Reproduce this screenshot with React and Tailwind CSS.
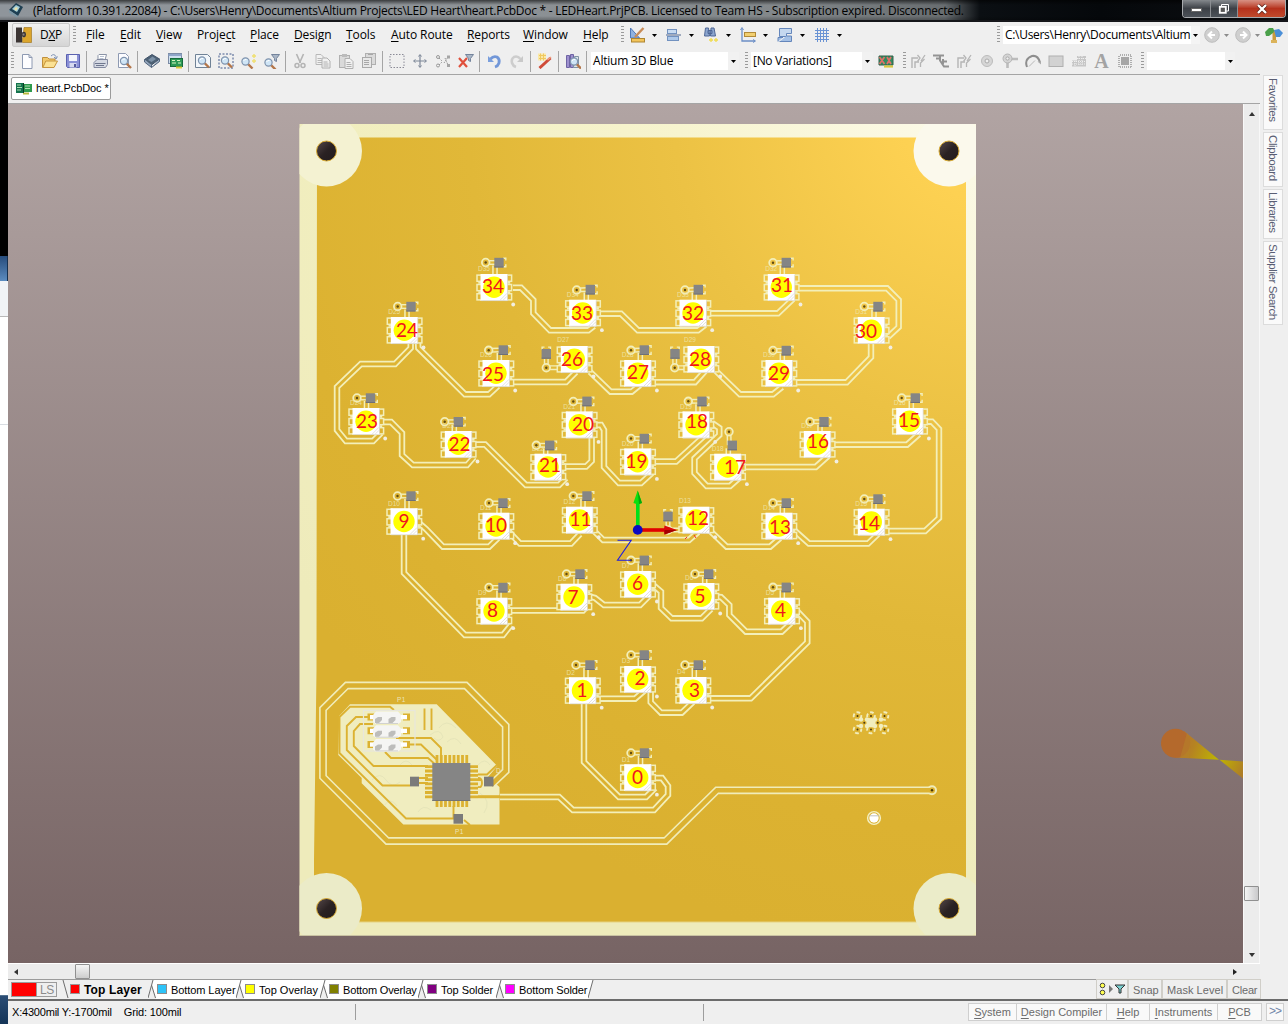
import React from "react";

const UI = "font-['Open_Sans','Noto_Sans',sans-serif]";
const SANS = "font-['Liberation_Sans',Arial,sans-serif]";

/* ---------- board data: [n, cx, cy, capX, capY, viaX, viaY, labelX, labelY] ---------- */
const LEDS = [
  [34, 494, 287.3, 499, 262.5, 485.7, 262.5, 493, 286],
  [33, 582.7, 313, 590.3, 289.5, 576.7, 290, 582, 313],
  [24, 404.3, 330.3, 411, 306.5, 397.7, 306.5, 407, 330.5],
  [25, 496, 373.3, 503.3, 350, 488.7, 350.3, 493, 374.5],
  [26, 574.3, 359.3, 546.3, 353.7, 546.3, 367.7, 572, 359.5],
  [27, 637.7, 373.3, 644.3, 350, 631, 350.3, 638, 372.5],
  [20, 579.3, 424.7, 587, 401.3, 573.3, 401.5, 583, 424],
  [22, 458.3, 444.3, 458.3, 421.7, 444.7, 421.7, 459.5, 444.5],
  [21, 548, 467, 549.7, 445.3, 536.3, 445.3, 550, 465],
  [23, 366, 421.3, 370.5, 398, 357, 398, 367, 421.5],
  [31, 781.3, 287.3, 786.3, 262.5, 773, 262.7, 782, 285],
  [32, 693, 313, 698.3, 289.5, 685, 290, 693, 313.5],
  [30, 871.3, 330.3, 878, 306.5, 864.3, 306.5, 866, 331.5],
  [28, 701, 359.3, 675, 353.7, 674.7, 367.7, 700, 359],
  [29, 779, 373.3, 786.3, 350.5, 773, 350.5, 779, 373.5],
  [18, 696, 424.7, 702, 401.3, 688.3, 401.3, 697, 421],
  [15, 909.7, 421.3, 915.3, 398, 901.7, 398, 909, 420],
  [16, 817.3, 444.3, 824, 421.7, 810, 421.7, 818, 441],
  [17, 727.7, 467, 732.3, 445.3, 729, 431.7, 735, 467.5],
  [19, 637.7, 461.7, 644.3, 438.5, 631, 438.5, 636.5, 461.5],
  [12, 696, 520, 668, 516.3, 668, 530, 698, 518],
  [13, 779, 526, 786.3, 503, 773, 503, 780, 527],
  [6, 637.7, 584.3, 644.3, 560.3, 631, 560.3, 637.5, 583],
  [5, 701, 596.3, 708.7, 574, 695, 574, 700, 596],
  [4, 781.7, 611, 786.3, 587.3, 773, 587.3, 780.5, 610.5],
  [2, 637.7, 679.3, 644.3, 655, 631, 655, 640, 678],
  [3, 693, 690.3, 698.3, 665, 685, 665, 694.5, 690],
  [14, 871.3, 522, 878, 499, 864.3, 499, 869, 523],
  [11, 579.5, 520, 587, 496, 573.3, 496, 580.5, 519],
  [10, 496, 526, 503, 503, 489, 503, 496, 525],
  [9, 404, 521.5, 411, 496, 397.5, 496, 404, 521.5],
  [8, 494, 611, 503, 587.5, 489, 587.5, 492.5, 610.5],
  [7, 574, 597, 580, 574, 566.5, 574, 573, 597.5],
  [1, 582.5, 690.5, 590, 665, 576, 665, 582, 690],
  [0, 637.7, 777.5, 644.5, 753, 631, 753, 637.5, 777.5],
];

const TRACES = [
  "513,287.7 521,287.7 533.3,300 533.3,313.3 550,330.3 588.3,330.3 594,326",
  "600,313.7 621,313.7 638,330.3 698,330.3 705,325",
  "711,313.3 778,313.3 793,299",
  "799,288.3 887,288.3 898.7,300 898.7,327 888,337",
  "871,344 871,357.3 846.7,382.3 795,382.3",
  "782,387 773,394.3 740,394.3 715,370",
  "705,371 695,382.2 653,382.2",
  "640,385 631.7,391.7 610.7,391.7 590,371.7",
  "576,372 566,382 512,382",
  "498,386 489,394.3 465,394.3 418.3,348 418,342",
  "410.7,342 410.7,348 395,364 361,364 337,387 337,430 346,441 373,441 381,433",
  "384,422 391,422 402,433 402,455 413,465 467,465 474,457",
  "476,444.5 485,444.5 526,485 559,485 566,478",
  "564,466.5 586,466.5 591.7,461 591.7,436",
  "596,425 601,425 604,430 604,467 619,483 641,483 652,473",
  "655,461.5 676,461.5 704,436",
  "712,423 719.3,428 719.3,435 694.5,458.5 694.5,473 706.7,486 730,486 739,478",
  "745,467 815.7,467 828,456",
  "835,444.7 907,444.7 919,434",
  "925,421.7 932,421.7 939,429 939,518 925,531 887,531",
  "878,534 868,543.5 809,543.5 795,531",
  "780,538 770,546.7 726.7,546.7 710,530.7",
  "698,532 689,540 603.3,540 593,530",
  "580,534 571,543.5 520,543.5 510,533",
  "498,538 489,546.7 443,546.7 426,529 419,523",
  "404,534 404,573 465,635 503,635 511,625",
  "509,610.5 583,610.5 590,603",
  "588,596 595,598 604,605 640,605 650,595",
  "652,584 661,591.7 661,608 671.7,618.3 701.7,618.3 711,609",
  "716,596.7 721,597 729.3,605 729.3,615 746,631.7 781.7,631.7 791,623",
  "797,611 807.3,621.7 807.3,642.3 750.7,698.3 708,698.3",
  "693,702 681.7,712.7 661,712.7 650.7,702.3 650.7,690",
  "645,690 635,698.7 597,698.7",
  "584,704 584,762 619,797 646,797 655,788",
  "652,778 662,778 668,786 668,795 654,810 573,810 559,797 500,797",
];

function Led({ d }) {
  const [n, x, y, cx, cy, vx, vy] = d;
  const side = cx < x - 18;
  const up = Math.abs(vx - cx) < 5 && !side;
  return (
    <g>
      {side ? (
        <>
          <path d={`M${cx - 4.2},${cy - 4}v-2.6h2.400M${cx + 1.8},${cy - 6.6}h2.400v2.6`} stroke="#f3efb9" strokeWidth="1.4" fill="none" />
          <path d={`M${vx},${vy}V${cy + 5}M${vx},${vy}H${x - 14}`} stroke="#f3efb9" strokeWidth="5" fill="none" />
          <path d={`M${vx},${vy}V${cy + 5}M${vx},${vy}H${x - 14}`} stroke="url(#gold)" strokeWidth="2.2" fill="none" />
        </>
      ) : (
        <>
          <path d={`M${cx - 4},${cy + 3}V${y - 12}`} stroke="#f3efb9" strokeWidth="5.6" />
          <path d={`M${cx - 4},${cy}V${y - 12}`} stroke="url(#gold)" strokeWidth="2.6" />
          <path d={`M${vx},${vy}L${cx - 3},${cy}`} stroke="#f3efb9" strokeWidth="5" />
          <path d={`M${vx},${vy}L${cx - 3},${cy}`} stroke="url(#gold)" strokeWidth="2.2" />
          {!up && <path d={`M${cx + 4},${cy - 4.2}h2.800v2.200M${cx + 6.8},${cy + 1.8}v2.400h-2.800`} stroke="#f3efb9" strokeWidth="1.4" fill="none" />}
        </>
      )}
      <circle cx={vx} cy={vy} r="3.8" fill="url(#gold)" stroke="#f3efb9" strokeWidth="1.8" />
      <circle cx={vx} cy={vy} r="1.2" fill="#5e4a14" />
      <rect x={cx - 4.7} y={cy - 4.7} width="9.4" height="9.6" fill="#858585" />
      <path d={`M${cx - 4.7},${cy + 4.5}h9.400`} stroke="#6e7078" strokeWidth="1" />
      {[-9.2, 0.2, 9.4].map((o) => (
        <g key={o} fill="url(#gold)" stroke="#f3efb9" strokeWidth="1.5">
          <rect x={x - 17} y={y + o - 3} width="5" height="6.2" />
          <rect x={x + 12} y={y + o - 3} width="5.6" height="6.2" />
        </g>
      ))}
      <path d={`M${x - 14},${y - 5.5}v2M${x - 14},${y + 4}v2M${x + 14.5},${y - 5.5}v2M${x + 14.5},${y + 4}v2`} stroke="#f3efb9" strokeWidth="3.4" />
      <text x={side ? x - 17 : x - 16} y={side ? y - 17 : y - 16} fontSize="6.5" fill="#efe6ac" opacity=".85" className="font-['Liberation_Sans',sans-serif]">
        {"D" + (n + 1)}
      </text>
      <rect x={x - 13.5} y={y - 13.3} width="27" height="26.8" fill="#fff" />
      <path d={`M${x - 13},${y + 13.3}h26.500v-26`} stroke="#d6d2cc" strokeWidth=".7" fill="none" />
      <path d={`M${x + 6},${y + 13}l7,-7M${x + 9},${y + 13}l4,-4`} stroke="#d5d5d5" strokeWidth=".7" />
      <circle cx={x} cy={y} r="10.7" fill="#ffff00" />
      <circle cx={x + 19.2} cy={y + 17.2} r="1.9" fill="#f2eee2" />
    </g>
  );
}

function Controller() {
  const pins = [0, 1, 2, 3, 4, 5, 6, 7];
  return (
    <g>
      <path d="M339.3 715.7L350 704.3H436.7L497.3 766L488 777L499.5 787V824.5H403.3L361.7 783.3V778L338.3 755Z" fill="#f0edbf" />
      <g stroke="#e6e5b9" strokeWidth="1" fill="none">
        <path d="M372 780q8 -9 14 0t14 2M400 765q6 -8 12 0M384 806q6 -10 13 0M430 735q10 -8 13 2q-4 6 -9 1M447 742q8 -8 14 2M456 728q-10 -10 -17 0M480 793q12 8 4 20M418 812q5 -8 13 -2M478 765q7 -8 12 0" />
      </g>
      <g stroke="#dcb231" strokeWidth="1.9" fill="none">
        <path d="M394 710L390 706.8H350L339.5 717V753L406 818.5H456" />
        <path d="M370 717H356L346.8 726V750L382.5 785.5H410" />
        <path d="M373 724H360L353.8 731V746L373.5 766H428" />
        <path d="M396 738H431L441 748V758M409 744.5H421L437 760M385 752L391 758H428L437 766" />
        <path d="M453.5 806V818M464 820L470 825M424.5 708.5V730M431.5 708.5V730M418 778H428M478 774.5H487L497 765M478 780H481M478 778q4 0 4 5t-4 4M418 783H428" />
      </g>
      <path d="M478 796.7H500" stroke="#dcb231" strokeWidth="3" />
      {pins.map((i) => (
        <path key={i} d={`M${437 + i * 4.25},755v52`} stroke="#dcb231" strokeWidth="2.8" />
      ))}
      {pins.map((i) => (
        <path key={"h" + i} d={`M425,${766.7 + i * 4.3}h53`} stroke="#dcb231" strokeWidth="2.8" />
      ))}
      <rect x="432.3" y="763" width="38" height="38" fill="#858585" />
      <path d="M432.3 800.5h38" stroke="#747474" />
      <rect x="363.5" y="710.5" width="51.5" height="40.5" fill="none" stroke="#e8e7dc" strokeWidth="1.2" />
      {[0, 1, 2].map((i) => (
        <g key={i}>
          <path d={`M367.500,${713.5 + i * 13.7}h7v7h-7zM403,${713.5 + i * 13.7}h7v7h-7z`} fill="#dcb231" />
          <rect x="370" y={715 + i * 13.7} width="37" height="4.3" fill="#fff" />
          <path d={`M373,${715 + i * 13.7}l3,-3.500h22l3,3.500v7l-3,2h-22l-3,-2z`} fill="#f5f5f3" />
          <path d={`M376,${723.5 + i * 13.7}h22`} stroke="#d2d2cf" strokeWidth="1" />
          <path d={`M375,${719 + i * 13.7}l3,-2h4v3l-3,3h-4zM388.500,${719 + i * 13.7}l3,-2h4v3l-3,3h-4z`} fill="#bdbdbb" />
        </g>
      ))}
      <rect x="410" y="776.7" width="9" height="9.7" fill="#7b7b7a" />
      <rect x="453.5" y="814" width="9.5" height="9.7" fill="#7b7b7a" />
      <g fontSize="6.5" fill="#ebe4b8" className="font-['Liberation_Sans',sans-serif]">
        <text x="397" y="702" letterSpacing=".5">P1</text>
        <text x="455" y="834" letterSpacing=".5">P1</text>
        <text x="496" y="773">D41</text>
      </g>
    </g>
  );
}

function Board() {
  const pads = [[857.5, 716], [871, 716], [884.5, 716], [857.5, 729.5], [871, 729.5], [884.5, 729.5]];
  return (
    <svg viewBox="8 104 1235 859" width="1235" height="859" className="block">
      <defs>
        <radialGradient id="gold" gradientUnits="userSpaceOnUse" cx="1000" cy="100" r="860">
          <stop offset="0" stopColor="#ffd75a" />
          <stop offset=".12" stopColor="#fdd152" />
          <stop offset=".38" stopColor="#ecc244" />
          <stop offset=".62" stopColor="#e1b838" />
          <stop offset=".85" stopColor="#dcb231" />
          <stop offset="1" stopColor="#dab030" />
        </radialGradient>
        <radialGradient id="edge" gradientUnits="userSpaceOnUse" cx="960" cy="130" r="800">
          <stop offset="0" stopColor="#fcfae9" />
          <stop offset=".35" stopColor="#f7f4cf" />
          <stop offset=".7" stopColor="#f2efc0" />
          <stop offset="1" stopColor="#eeebbb" />
        </radialGradient>
        <linearGradient id="hole" x1="0" y1="0" x2="1" y2="1">
          <stop offset="0" stopColor="#56494a" />
          <stop offset=".5" stopColor="#2a2223" />
          <stop offset="1" stopColor="#211a1b" />
        </linearGradient>
        <linearGradient id="cone" gradientUnits="userSpaceOnUse" x1="1175" y1="742" x2="1219" y2="760">
          <stop offset="0" stopColor="#b56f30" />
          <stop offset=".4" stopColor="#b58322" />
          <stop offset="1" stopColor="#beb800" />
        </linearGradient>
        <linearGradient id="cone2" gradientUnits="userSpaceOnUse" x1="1219" y1="760" x2="1243" y2="772">
          <stop offset="0" stopColor="#c0b300" />
          <stop offset="1" stopColor="#ae7d28" />
        </linearGradient>
      </defs>
      <rect x="299.5" y="124" width="676.5" height="812" fill="url(#edge)" />
      <path d="M300 935.5H976" stroke="#c9c2a2" strokeWidth="1" />
      <path d="M317 137.5H966V922H314V860L316.5 670Z" fill="url(#gold)" />
      <path d="M316 922H966" stroke="#e6d382" />
      {[[326.5, 151, "#f4f2d2"], [949, 151, "#fbf9ec"], [326.5, 908.5, "#ebebc8"], [949, 908.5, "#ebecc9"]].map(([x, y, c]) => (
        <g key={x + "-" + y}>
          <clipPath id={"c" + x + y}><rect x="299.5" y="124" width="676.5" height="811" /></clipPath>
          <circle cx={x} cy={y} r="35.5" fill={c} clipPath={`url(#c${x}${y})`} />
          <circle cx={x} cy={y} r="10" fill="url(#hole)" stroke="#d8ab35" strokeWidth="1" />
        </g>
      ))}

      <g fill="none" strokeLinejoin="miter">
        <polyline points="932,790.3 717,790.3 665.5,841 387.3,841 323,777 323,709 346.7,685.5 465.7,685.5 505.7,725.7 505.7,771 491,785" stroke="#f0ecb9" strokeWidth="7.8" />
        {TRACES.map((p) => <polyline key={p} points={p} stroke="#f3efb9" strokeWidth="6.4" />)}
      </g>
      <circle cx="932" cy="790.3" r="5" fill="#f0ecb9" />
      <Controller />
      <g fill="none">
        <polyline points="932,790.3 717,790.3 665.5,841 387.3,841 323,777 323,709 346.7,685.5 465.7,685.5 505.7,725.7 505.7,771 491,785" stroke="url(#gold)" strokeWidth="4.6" />
        {TRACES.map((p) => <polyline key={p} points={p} stroke="url(#gold)" strokeWidth="2.8" />)}
      </g>
      <circle cx="932" cy="790.3" r="3" fill="#dcb231" />
      <circle cx="932" cy="790.3" r="1.2" fill="#46360c" />

      {LEDS.map((d) => <Led key={d[0]} d={d} />)}

      <rect x="484" y="776.7" width="9.5" height="9.7" fill="#7b7b7a" />

      <g>
        {pads.map(([x, y]) => (
          <g key={x + "," + y}>
            <circle cx={x} cy={y} r="3.8" fill="none" stroke="#f1edbd" strokeWidth="1.9" strokeDasharray="3.8 2.17" strokeDashoffset="1.5" />
            <circle cx={x} cy={y} r="1" fill="#4a3a10" />
          </g>
        ))}
        <rect x="866.5" y="718.2" width="9" height="9" fill="#f1edbd" />
        {[[861, 719.5], [861, 726], [867, 719.5], [867, 726], [875, 719.5], [875, 726], [881, 719.5], [881, 726]].map(([x, y]) => (
          <circle key={x + "_" + y} cx={x} cy={y} r="2.2" fill="#f1edbd" />
        ))}
        <circle cx="864.3" cy="722.7" r="1" fill="#4a3a10" />
        <circle cx="877.7" cy="722.7" r="1" fill="#4a3a10" />
        <circle cx="874" cy="818" r="6.4" fill="#dcb231" stroke="#f4f0c4" strokeWidth="1.4" />
        <circle cx="874" cy="818" r="4.7" fill="#fff" />
        <path d="M869.5 815.8h9.5" stroke="#c0c0c0" strokeWidth="1" />
      </g>

      <g>
        <path d="M617.5 540.2H631.2L617.5 560.2H631.2" fill="none" stroke="#1d1de0" strokeWidth="1.1" />
        <rect x="636" y="502" width="3.6" height="26" fill="#00e01a" />
        <path d="M637.7 490.5L642 503q-4.3 2 -8.6 0Z" fill="#0be00f" />
        <path d="M637.7 490.5L642 503l-3 1Z" fill="#05a80b" />
        <rect x="640" y="528.2" width="25" height="3.6" fill="#e10000" />
        <path d="M677 530L664.5 534.5q-1.5 -4.5 0 -9Z" fill="#d90808" />
        <path d="M677 530L664.5 534.5v-4.5Z" fill="#a40000" />
        <circle cx="637.7" cy="529.9" r="4.9" fill="#0a0ac0" />
        <path d="M685 539l2 -2M694 535l2 3" stroke="#f02020" strokeWidth=".9" />
      </g>

      <path d="M1219.5 759.8L1243 761.5V778.5Z" fill="url(#cone2)" />
      <path d="M1184 731L1219 759.8L1175 757.5Z" fill="url(#cone)" />
      <circle cx="1175.5" cy="743.3" r="14.5" fill="#b4692c" />
      <path d="M1187 733q5 5 2 25H1180z" fill="#b5812a" opacity=".6" />

      <g fill="#f0141e" fontSize="19" textAnchor="middle" className="font-['Lato','Open_Sans',sans-serif]">
        {LEDS.map((d) => <text key={d[0]} x={d[7]} y={d[8] + 6.6}>{d[0]}</text>)}
      </g>
    </svg>
  );
}

/* ---------- toolbar icons (16px grid) ---------- */
const I = ({ children }) => <svg viewBox="0 0 16 16" width="16" height="16" className="block shrink-0" fill="none">{children}</svg>;
const Lens = ({ x = 0, y = 0 }) => (
  <g transform={`translate(${x} ${y})`}>
    <path d="M9 9l4.5 4.5" stroke="#b3764a" strokeWidth="2.4" />
    <circle cx="6.5" cy="6.5" r="3.6" fill="#cfe5f6" stroke="#7f93ad" strokeWidth="1.2" />
    <path d="M4.5 6q1-2 3-1.5" stroke="#fff" />
  </g>
);
const Page = ({ x = 0, y = 0, g = "#a9a9a9" }) => (
  <path transform={`translate(${x} ${y})`} d="M.5 .5h5l3 3v7h-8zM2 4.5h4M2 6.5h5M2 8.5h5" fill="#f1f1f1" stroke={g} />
);
const icons = {
  blank: <I><path d="M3.5 1.500h6.500l3 3v11h-9.500z" fill="#fdfdff" stroke="#8e9ab2" /><path d="M10 1.5v3h3" stroke="#8e9ab2" /></I>,
  open: <I><path d="M.5 14.500v-10h5l1.500 1.500h6v3" fill="#f1c96a" stroke="#bf8f3c" /><path d="M.8 14.500l3-6.500h11.700l-3.500 6.500z" fill="#fbe193" stroke="#c6953e" /><path d="M9 3q3-3 5 .5v2m-2-1.500l2 2l1.500-2.500" stroke="#7f93b5" /></I>,
  save: <I><path d="M1.5 1.500h13v13h-12l-1-1z" fill="#8a90d6" stroke="#5b62b0" /><rect x="4" y="2" width="8" height="6" fill="#f4f6fc" /><rect x="4.5" y="10" width="7" height="4.5" fill="#d7daf0" /><rect x="9" y="11" width="2" height="3" fill="#545a9c" /></I>,
  print: <I><path d="M5 7V2.500l1-1h7.500L12 7" fill="#fff" stroke="#8a93a6" /><path d="M7 3.500h4M6.500 5.500h4" stroke="#b8c2d2" /><path d="M1 9.500l3-3h10.500v5l-2 3h-11.500z" fill="#d5d9e3" stroke="#8289a0" /><path d="M2 10.500h10.500M3 12.500h8" stroke="#6f778e" /></I>,
  preview: <I><path d="M2.5 .5h7l3 3v11h-10z" fill="#fcfcff" stroke="#8e9ab2" /><Lens x={1.5} y={1.5} /></I>,
  chip: <I><path d="M.5 6.500L8 1.500l7.500 4.500l-8 6z" fill="#4d6175" stroke="#41536a" /><path d="M.5 6.500v2.500l7 5.500v-2.500M15.500 6v2.500l-8 6" fill="#93a5bb" stroke="#53667f" /><path d="M4 7l4.500-3.500l3.500 2.500l-4.500 3z" fill="#7c92a8" /></I>,
  board: <I><rect x="1.5" y=".5" width="13" height="10" fill="#cfe0ef" stroke="#7c8ca6" /><path d="M1.500 2h13" stroke="#8fa6c8" strokeWidth="2" /><rect x="3.5" y="5.5" width="12" height="8" fill="#2c9a55" stroke="#176a3b" /><path d="M5 7.500h3M10 7.500h3M5 10h4M11 10h3" stroke="#d7f5c0" /><path d="M9 14.500h6" stroke="#ddcd3d" strokeWidth="2" /></I>,
  zfit: <I><path d="M.5 1.500h12l3 3v10h-15z" fill="#f2f6fa" stroke="#6f8296" /><Lens x={.5} y={1} /></I>,
  zarea: <I><rect x="1" y="1" width="14" height="14" stroke="#435a8c" strokeDasharray="2 1.5" /><Lens x={.5} y={1} /></I>,
  zpts: <I><Lens x={-2} y={2} /><path d="M13 1v4M11 3h4M13 6v4M11 8h4" stroke="#f0e070" strokeWidth="1.4" /></I>,
  zfilter: <I><Lens x={-2} y={3} /><path d="M7.500 1.500h8l-3 4v3l-2-1v-2z" fill="#aab6c6" stroke="#74849c" /></I>,
  cut: <I><path d="M4.500 1l4 9M11.500 1l-4 9" stroke="#b4b4b4" strokeWidth="1.6" /><circle cx="5" cy="12.500" r="2" stroke="#b4b4b4" strokeWidth="1.5" /><circle cx="11" cy="12.500" r="2" stroke="#b4b4b4" strokeWidth="1.5" /></I>,
  copy: <I><Page x={.5} y={1} g="#b8b8b8" /><Page x={6.5} y={4.5} g="#b0b0b0" /></I>,
  paste: <I><rect x="1.5" y="2.5" width="10" height="12" fill="#dadada" stroke="#b0b0b0" /><rect x="4" y="1" width="5" height="3" fill="#bbb" /><Page x={6.5} y={5} g="#b0b0b0" /></I>,
  paste2: <I><rect x="4.5" y=".5" width="10" height="11" fill="#dadada" stroke="#b0b0b0" /><rect x="1.5" y="4.5" width="9" height="10" fill="#e8e8e8" stroke="#aaa" /><path d="M3 7.500h5M3 9.500h5M3 11.500h5M7 1.500h5" stroke="#a8a8a8" /></I>,
  select: <I><rect x="1" y="1.5" width="14" height="13" stroke="#8a8a96" strokeDasharray="1.5 1.5" /></I>,
  move: <I><path d="M8 2v12M2 8h12" stroke="#7d8798" strokeWidth="1.2" /><path d="M6.500 3.500l1.500-2l1.500 2M6.500 12.500l1.500 2l1.500-2M3.500 6.500l-2 1.500l2 1.500M12.500 6.500l2 1.500l-2 1.500" stroke="#7d8798" /></I>,
  desel: <I><path d="M4 5l3 3M4 12l3-3M10 5l3 7M9 10l4-6" stroke="#999" strokeDasharray="1.5 1" /><circle cx="3" cy="4" r="1.5" stroke="#999" /><circle cx="3" cy="12.500" r="1.5" stroke="#999" /><path d="M12 2.500h3v3h-3zM12 11h3v3h-3z" fill="#a5a5a5" /></I>,
  clear: <I><path d="M1 5l8 9M9 5l-8 9" stroke="#e0503c" strokeWidth="2.2" /><path d="M7.500 1.500h8l-3 4v3l-2-1v-2z" fill="#aab6c6" stroke="#74849c" /></I>,
  undo: <I><path d="M2 3v6h6z" fill="#7a9fdd" /><path d="M4.500 6q3-3.500 6.500-2q3 2 2 6q-1 3-4 4" stroke="#7297d8" strokeWidth="2.8" /></I>,
  redo: <I><path d="M14 3v6H8z" fill="#c9c9c9" /><path d="M11.500 6q-3-3.500-6.500-2q-3 2-2 6q1 3 4 4" stroke="#cdcdcd" strokeWidth="2.6" /></I>,
  wand: <I><path d="M1 .5h8v7h-8z" fill="#fae9a8" /><path d="M2 2.500h7M2 5.500h7M3.500 .5v7M6.500 .5v7" stroke="#f0c860" /><path d="M2.500 15L13.500 5" stroke="#cf4b38" strokeWidth="3" /><path d="M10.500 7l3.500-3" stroke="#f0a080" strokeWidth="1.5" /></I>,
  browse: <I><path d="M1.500 2.500h3v12h-3zM5.500 1.500h3v13h-3z" fill="#9e90cf" stroke="#6e64a4" /><path d="M9.500 3.500h4v11h-5z" fill="#dfe8ea" stroke="#8093a5" /><Lens x={2.5} y={2} /></I>,
  ruler: <I><path d="M1.500 1v10h9z" fill="#8fb2e0" stroke="#5079b8" /><path d="M14.500 1L6 10" stroke="#c88c58" strokeWidth="2.4" /><rect x="2.5" y="11.500" width="13" height="3.5" fill="#f2c45a" stroke="#ae8532" /></I>,
  align: <I><rect x="1.500" y="2.500" width="9" height="4" fill="#c9dcf2" stroke="#7292c0" /><path d="M0 8h15" stroke="#53698f" /><rect x="1.500" y="9.500" width="11" height="4" fill="#aec9ea" stroke="#7292c0" /></I>,
  find: <I><path d="M2.500 1h3l1 8h-5zM8 1h3l1.500 8h-5zM5 3.500h4v3h-4z" fill="#8ca6cf" stroke="#4e6796" /><path d="M8 11v4M6 13h4M13 11v4M11 13h4" stroke="#f0dc50" strokeWidth="1.3" /></I>,
  dim: <I><path d="M2 2v12h13" stroke="#6c8fc6" strokeWidth="1.3" /><path d="M.5 3l1.500-2.500l1.500 2.500M13 12.500l2.500 1.500l-2.500 1.500" stroke="#6c8fc6" /><rect x="4.500" y="5.500" width="11" height="4" fill="#f2cf70" stroke="#b28a38" /></I>,
  room: <I><path d="M2.500 1.500h12v5h-5v3h-7z" fill="#c5d8ef" stroke="#6486bb" /><path d="M1 14.500v-4h5M9.500 9h5v5.500h-12" fill="#a4c0e5" stroke="#6486bb" /></I>,
  grid: <I><path d="M3.500 1v14M6.500 1v14M9.500 1v14M12.500 1v14M1 3.500h14M1 6.500h14M1 9.500h14M1 12.500h14" stroke="#6a93d4" /></I>,
  nochip: <I><path d="M1 3h14v9h-14z" fill="#2f8d60" stroke="#35604b" /><path d="M1.500 4l5 7M6.500 4l-5 7M9 4l4 7M13 4l-4 7" stroke="#e07068" strokeWidth="1.7" /><path d="M6 13.500h9" stroke="#d8c840" strokeWidth="2.2" /></I>,
  r1: <I><path d="M2 15v-10h6M5 15v-6h4" stroke="#b5b5b5" strokeWidth="1.4" /><path d="M7.500 2l2.500 3l-2.500 3.500M11 8l4-6M10.500 14v-4l4-4" stroke="#b5b5b5" strokeWidth="1.3" /></I>,
  r2: <I><path d="M0 2.500h11M7 2.500v5l4 6h5M3 5.500h4M10 6v5M10 8.500h4" stroke="#939393" strokeWidth="2" /></I>,
  pad: <I><circle cx="8" cy="8" r="5.500" fill="#d6d6d6" stroke="#bcbcbc" /><circle cx="8" cy="8" r="2" fill="#efefef" stroke="#aaa" /></I>,
  via: <I><path d="M8 6h8M5.500 9v6" stroke="#bcbcbc" strokeWidth="2.6" /><circle cx="5.500" cy="5.500" r="4.500" fill="#d4d4d4" stroke="#b5b5b5" /><circle cx="5.500" cy="5.500" r="1.600" fill="#f0f0f0" stroke="#aaa" /></I>,
  arc: <I><path d="M2 14q-3-8 5-11q6-1 8 6.500" stroke="#8e8e8e" strokeWidth="2" /><path d="M4 13.500L10 7.500" stroke="#b8b8b8" /><path d="M12.500 8.500h3.500v3z" fill="#aaa" /></I>,
  fill: <I><rect x="1" y="3" width="14" height="10.500" fill="#d2d2d2" stroke="#b0b0b0" /></I>,
  poly: <I><path d="M6 3h9v10.500h-14v-6h5z" fill="#c6c6c6" /><path d="M6 5.500h9M1 8.500h14M1 11h14M4 8v5M8 3v10M11 3v10" stroke="#f0f0f0" strokeDasharray="1 1" /></I>,
  comp: <I><rect x="4" y="4" width="8" height="8" fill="#a6a6a6" /><path d="M3 2h11M3 14h11M2 3v11M14 3v11" stroke="#aeaeae" strokeWidth="2" strokeDasharray="1 1" /></I>,
};

const Grip = () => <div className="h-[18px] w-[3px] shrink-0 bg-[repeating-linear-gradient(180deg,#9a9a9a_0px,#9a9a9a_1px,#efefef_1px,#efefef_3px)]" />;
const Caret = ({ dim }) => (
  <svg width="5" height="3" viewBox="0 0 5 3" className="shrink-0"><path d="M0 0h5L2.500 3z" fill={dim ? "#8b8b8b" : "#000"} /></svg>
);
const Sep = () => <div className="flex w-[5px] shrink-0 justify-center"><div className="h-[21px] w-px bg-[#a5a5a5]" /></div>;
const Cell = ({ n }) => <div className="flex w-[23px] shrink-0 justify-center">{icons[n]}</div>;

const MENU = [
  ["", "F", "ile", "w-[34px]"], ["", "E", "dit", "w-[36px]"], ["", "V", "iew", "w-[41px]"], ["Proje", "c", "t", "w-[53px]"],
  ["", "P", "lace", "w-[44px]"], ["", "D", "esign", "w-[52px]"], ["", "T", "ools", "w-[45px]"], ["", "A", "uto Route", "w-[76px]"],
  ["", "R", "eports", "w-[56px]"], ["", "W", "indow", "w-[60px]"], ["", "H", "elp", "w-[38px]"],
];

const GROUPS = [
  ["blank", "open", "save"], ["print", "preview"], ["chip", "board"], ["zfit", "zarea", "zpts", "zfilter"],
  ["cut", "copy", "paste", "paste2"], ["select", "move", "desel", "clear"], ["undo", "redo"], ["wand"], ["browse"],
];

function TitleBar() {
  return (
    <div className="flex h-[22px] border-b-2 border-[#15161a] bg-[linear-gradient(90deg,#8f959b_0px,#8d9296_500px,#82878a_780px,#6f7477_900px,#686d70_945px,#0b0f13_980px,#05080b_1100px,#0d0f12_1288px)]">
      <div className="flex w-full items-start bg-[linear-gradient(180deg,rgba(0,0,0,.6)_0px,rgba(0,0,0,0)_5px,rgba(0,0,0,0)_16px,rgba(0,0,0,.25)_20px)]">
        <svg width="16" height="16" viewBox="0 0 16 16" className="ml-[8px] mt-[2px] shrink-0">
          <path d="M1 8L8 1l7 4l-5 9z" fill="#1e3f52" /><path d="M4 7l4-4l4 2l-3 5z" fill="#9fcbd8" /><path d="M6 7l2-2l2 1l-2 3z" fill="#e9e0a8" /><path d="M1 8l9 6l-1 1.500l-8-5z" fill="#7c98a6" />
        </svg>
        <div className={`ml-[9px] grow whitespace-pre pt-[2px] text-[12px] leading-[17px] tracking-[-0.255px] text-black ${UI}`}>
          {"(Platform 10.391.22084) - C:\\Users\\Henry\\Documents\\Altium Projects\\LED Heart\\heart.PcbDoc * - LEDHeart.PrjPCB. Licensed to Team HS - Subscription expired. Disconnected."}
        </div>
        <div className="mr-[2px] flex h-[18px] w-[104px] shrink-0 overflow-hidden rounded-b-[4px] border border-t-0 border-[#a8abae]">
          <div className="flex w-[28px] items-center justify-center border-r border-[#8b8e92] bg-gradient-to-b from-[#85898d] via-[#3c4046] to-[#4c5259]"><div className="mt-[3px] h-[4px] w-[11px] border border-[#666] bg-white" /></div>
          <div className="flex w-[27px] items-center justify-center border-r border-[#8b8e92] bg-gradient-to-b from-[#85898d] via-[#3c4046] to-[#4c5259]">
            <svg width="12" height="12" viewBox="0 0 12 12"><path d="M3.500 3V1.500h7v6.500h-2" stroke="#fff" fill="none" /><rect x="1.800" y="3.800" width="6" height="6" fill="#555" stroke="#fff" strokeWidth="1.8" /></svg>
          </div>
          <div className="flex grow items-center justify-center bg-gradient-to-b from-[#d79184] via-[#b5311c] to-[#c04a2c]">
            <svg width="12" height="10" viewBox="0 0 12 10"><path d="M2 1l8 8M10 1l-8 8" stroke="#5a2018" strokeWidth="3.8" /><path d="M2 1l8 8M10 1l-8 8" stroke="#fff" strokeWidth="2.4" /></svg>
          </div>
        </div>
      </div>
    </div>
  );
}

function MenuBar() {
  return (
    <div className={`flex h-[26px] items-center text-[12px] text-black ${UI}`}>
      <div className="ml-[4px] flex h-[24px] w-[58px] items-center rounded-[2px] border border-[#c9c9c9] bg-gradient-to-b from-[#f1f1f1] to-[#d5d5d5] pl-[3px]">
        <svg width="16" height="16" viewBox="0 0 16 16"><path d="M8 .5h7.500v15H6.500v-5q3 0 3-3t-2-2z" fill="#dba52c" stroke="#9a6f16" strokeWidth=".6" /><path d="M0 .5h6v5q4-2 4 2t-4 2v6H0z" fill="#3b3534" /><path d="M6.500 6.500h2v2h-2z" fill="#8d8780" /></svg>
        <span className="ml-[8px] tracking-[-0.3px]">D<u>X</u>P</span>
      </div>
      <div className="ml-[3px] mr-[10px]"><Grip /></div>
      {MENU.map(([a, b, c, w]) => (
        <div key={a + b + c} className={`${w} shrink-0 whitespace-nowrap tracking-[-0.1px]`}>{a}<span className="underline underline-offset-2">{b}</span>{c}</div>
      ))}
      <div className="mr-[5px]"><Grip /></div>
      {["ruler", "align", "find", "dim", "room", "grid"].map((n) => (
        <div key={n} className="flex w-[37px] shrink-0 items-center gap-[7px]">{icons[n]}<Caret /></div>
      ))}
      <div className="grow" />
      <Grip />
      <div className="ml-[3px] flex h-[18px] w-[197px] items-center bg-white pl-[2px]">
        <span className="w-[186px] whitespace-nowrap tracking-[-0.3px]">{"C:\\Users\\Henry\\Documents\\Altium"}</span>
        <div className="flex h-full grow items-center justify-center bg-[#f4f4f4]"><Caret /></div>
      </div>
      {["M11 8H5M8 4.500L4.500 8L8 11.500", "M5 8h6M8 4.500L11.500 8L8 11.500"].map((d) => (
        <div key={d} className="ml-[4px] flex w-[27px] items-center gap-[4px]">
          <svg width="16" height="16" viewBox="0 0 16 16" fill="none"><circle cx="8" cy="8" r="7.3" fill="#cfcfcf" stroke="#bdbdbd" /><path d={d} stroke="#fff" strokeWidth="2" /></svg>
          <Caret dim />
        </div>
      ))}
      <svg width="18" height="16" viewBox="0 0 18 16" className="ml-[3px] mr-[5px]">
        <rect x="7.500" y="3" width="3.500" height="12.500" fill="#c99a3c" /><path d="M0 5l4-4h4q2 3 0 5l-4 3H1z" fill="#4aa04a" /><path d="M9 3l5-1l4 4l-3 4h-4z" fill="#4a8fd8" /><path d="M6 13h6v3h-6z" fill="#dbb35a" />
      </svg>
    </div>
  );
}

function ToolBar() {
  return (
    <div className={`flex h-[26px] items-center text-[12px] text-black ${UI}`}>
      <div className="ml-[3px] mr-[1px]"><Grip /></div>
      {GROUPS.map((g) => (
        <React.Fragment key={g[0]}>{g.map((n) => <Cell key={n} n={n} />)}<Sep /></React.Fragment>
      ))}
      <div className="ml-[2px] flex h-[18px] w-[148px] items-center bg-white pl-[2px]">
        <span className="grow whitespace-nowrap tracking-[-0.2px]">Altium 3D Blue</span>
        <div className="flex h-full w-[11px] items-center justify-center bg-[#f1f1f1]"><Caret /></div>
      </div>
      <div className="ml-[6px]"><Grip /></div>
      <div className="ml-[3px] flex h-[18px] w-[122px] items-center bg-white pl-[2px]">
        <span className="grow whitespace-nowrap tracking-[-0.3px]">[No Variations]</span>
        <div className="flex h-full w-[11px] items-center justify-center bg-[#f1f1f1]"><Caret /></div>
      </div>
      <div className="ml-[5px]">{icons.nochip}</div>
      <div className="ml-[9px]"><Grip /></div>
      <Cell n="r1" /><Cell n="r2" /><Cell n="r1" /><Cell n="pad" /><Cell n="via" /><Cell n="arc" /><Cell n="fill" /><Cell n="poly" />
      <div className="flex w-[23px] justify-center font-['Liberation_Serif',serif] text-[20px] font-bold leading-[20px] text-[#a3a3a3]">A</div>
      <Cell n="comp" />
      <div className="ml-[5px]"><Grip /></div>
      <div className="ml-[3px] flex h-[18px] w-[88px] items-center justify-end bg-white"><div className="flex h-full w-[10px] items-center justify-center bg-[#f1f1f1]"><Caret /></div></div>
    </div>
  );
}

const Slants = ({ a, b }) => (
  <svg width="8" height="19" viewBox="0 0 8 19" className="block shrink-0">
    <rect width="8" height="19" fill="#efefef" />
    <path d="M0 0H5L0 18Z" fill={a} /><path d="M5 0H8V18H7.500L4 5Z" fill={b} />
    <path d="M0 18L5 0M3.500 5L7.500 18" stroke="#6e6e6e" fill="none" />
  </svg>
);

const TABS = [
  ["Bottom Layer", "bg-[#2dc3f8]", "w-[80px]", "tracking-[-0.08px]"],
  ["Top Overlay", "bg-[#ffff00]", "w-[76px]", "tracking-[0.02px]"],
  ["Bottom Overlay", "bg-[#808000]", "w-[90px]", "tracking-[-0.15px]"],
  ["Top Solder", "bg-[#800080]", "w-[70px]", "tracking-[-0.04px]"],
  ["Bottom Solder", "bg-[#ff00ff]", "w-[84px]", "tracking-[-0.1px]"],
];

function LayerTabs() {
  return (
    <div className={`flex h-[22px] items-start border-b-2 border-[#6b6b6b] text-[11px] leading-[20px] ${SANS}`}>
      <div className="flex h-[20px] w-[1088px] shrink-0 items-start border-t border-[#9b9b9b]">
        <div className="ml-[3px] mt-[2px] flex h-[15px] w-[46px] border border-[#9b9b9b] text-[12px] text-[#8b8b8b]">
          <div className="w-[25px] border-r border-[#9b9b9b] bg-[#ff0000]" /><span className="pl-[3px] leading-[14px] tracking-[-0.5px]">LS</span>
        </div>
        <svg width="8" height="19" viewBox="0 0 8 19" className="ml-[5px] block"><path d="M1 0L6 18" stroke="#6e6e6e" fill="none" /></svg>
        <div className="flex w-[78px] pt-[4px]"><div className="h-[10px] w-[10px] shrink-0 border border-[#999] bg-[#ff0000]" /><b className="-mt-[4px] ml-[4px] whitespace-nowrap text-[12px] tracking-[0.15px] text-black">Top Layer</b></div>
        {TABS.map(([t, c, w, tr], i) => (
          <React.Fragment key={t}>
            <Slants a={i ? "#fff" : "#efefef"} b="#fff" />
            <div className={`${w} flex h-[19px] shrink-0 bg-white pt-[4px]`}>
              <div className={`${c} ml-[1px] h-[10px] w-[10px] shrink-0 border border-[#8d8d8d]`} /><span className={`-mt-[4px] ml-[4px] whitespace-nowrap text-black ${tr}`}>{t}</span>
            </div>
          </React.Fragment>
        ))}
        <svg width="8" height="19" viewBox="0 0 8 19" className="block"><path d="M0 0H5L0 18Z" fill="#fff" /><path d="M0 18L5 0" stroke="#6e6e6e" /></svg>
      </div>
      <div className="flex h-[20px] text-[#6b6b6b]">
        <div className="flex w-[32px] items-center border border-[#d0cec8] pl-[2px]">
          <svg width="28" height="14" viewBox="0 0 28 14"><circle cx="3.500" cy="3.500" r="2.300" fill="#ffff50" stroke="#444" /><circle cx="3.500" cy="10.500" r="2.300" fill="#ffff50" stroke="#444" /><path d="M10 3v8l4-4z" fill="#777" /><path d="M16 3h10l-4 4v4h-2v-4z" fill="#79cfd0" stroke="#333" /></svg>
        </div>
        <div className="w-[34px] border border-[#d0cec8] pl-[4px]">Snap</div>
        <div className="w-[65px] whitespace-nowrap border border-[#d0cec8] pl-[4px] tracking-[0.05px]">Mask Level</div>
        <div className="w-[34px] border border-[#d0cec8] pl-[4px] tracking-[-0.2px]">Clear</div>
      </div>
    </div>
  );
}

const STATUS = [["S", "ystem", "w-[48px]"], ["D", "esign Compiler", "w-[90px]"], ["H", "elp", "w-[43px]"], ["I", "nstruments", "w-[68px]"], ["P", "CB", "w-[43px]"]];

function StatusBar() {
  return (
    <div className={`flex h-[22px] items-center text-[11px] text-black ${SANS}`}>
      <div className="w-[348px] shrink-0 whitespace-pre border-r border-[#9d9d9d] pl-[4px] leading-[16px]"><span className="tracking-[-0.2px]">X:4300mil Y:-1700mil</span><span className="pl-[12px] tracking-[-0.15px]">Grid: 100mil</span></div>
      <div className="h-[17px] w-[348px] shrink-0 border-r border-[#9d9d9d]" />
      <div className="grow" />
      <div className="flex h-[18px] border border-[#cfcfcf] bg-[#f9f9f9] leading-[17px] text-[#6b6b6b]">
        {STATUS.map(([a, b, w], i) => (
          <div key={b} className={`${w} ${i < 4 ? "border-r border-[#cfcfcf]" : ""} whitespace-nowrap text-center`}><span className="underline underline-offset-2">{a}</span>{b}</div>
        ))}
      </div>
      <div className="ml-[4px] mr-[4px] h-[18px] w-[18px] border border-[#cfcfcf] bg-[#f9f9f9] text-center text-[12px] leading-[15px] tracking-[-1px] text-[#7184a8]">&gt;&gt;</div>
    </div>
  );
}

const SIDE = [["Favorites", "h-[55px]"], ["Clipboard", "h-[55px]"], ["Libraries", "h-[50px]"], ["Supplier Search", "h-[84px]"]];

export default function App() {
  return (
    <div className="flex h-[1024px] w-[1288px] flex-col overflow-hidden bg-[#efefef]">
      <TitleBar />
      <div className="flex h-[1002px]">
        <div className="flex w-[8px] shrink-0 flex-col bg-white">
          <div className="h-[234px] bg-black" />
          <div className="h-[25px] border-r border-[#16304f] bg-gradient-to-b from-[#274c7c] to-[#5c8cc0]" />
          <div className="h-[36px] border-b border-[#b9b9b9] bg-[#f1f3f6]" />
          <div className="h-[108px] border-b border-[#d9dde2]" />
          <div className="grow" />
          <div className="h-[29px] border-t border-[#53718f] bg-gradient-to-b from-[#2a4c74] to-[#143457]" />
        </div>
        <div className="flex w-[1280px] flex-col">
          <MenuBar />
          <ToolBar />
          <div className="flex h-[905px]">
            <div className="flex w-[1252px] shrink-0 flex-col border-t border-[#a5a5a5]">
              <div className="flex h-[29px] items-start border-b border-[#a5a5a5] pl-[3px] pt-[2px]">
                <div className={`flex h-[23px] w-[100px] items-center rounded-[2px] border border-[#9b9b9b] bg-white pl-[4px] text-[11px] text-black ${SANS}`}>
                  <svg width="16" height="12" viewBox="0 0 16 12"><rect width="7" height="10" fill="#14734e" /><rect x="7" y="1" width="9" height="8" fill="#2f9a4e" /><path d="M1 2h4M1 4.500h5M1 7h4M9 3h5M9 5.500h5" stroke="#aee0b0" /><path d="M7 10.500h6" stroke="#b9b93e" strokeWidth="2" /><path d="M7.500 0v10" stroke="#0a3d22" /></svg>
                  <span className="ml-[4px] whitespace-nowrap tracking-[-0.1px]">heart.PcbDoc *</span>
                </div>
              </div>
              <div className="flex h-[859px]">
                <div className="w-[1235px] shrink-0 bg-gradient-to-b from-[#b1a4a3] to-[#776464]"><Board /></div>
                <div className="flex w-[17px] flex-col items-center border-x border-[#f8f8f8] bg-[#ececec]">
                  <svg width="6" height="4" viewBox="0 0 6 4" className="mt-[8px]"><path d="M3 0l3 4H0z" fill="#333" /></svg>
                  <div className="mt-[770px] h-[15px] w-[15px] rounded-[1px] border border-[#909090] bg-gradient-to-r from-[#f5f5f5] to-[#c9c9cb]" />
                  <svg width="6" height="4" viewBox="0 0 6 4" className="mt-[52px]"><path d="M3 4l3-4H0z" fill="#333" /></svg>
                </div>
              </div>
              <div className="flex h-[16px] items-center border-t border-white bg-[#ececec] pl-[6px]">
                <svg width="4" height="6" viewBox="0 0 4 6"><path d="M0 3l4-3v6z" fill="#333" /></svg>
                <div className="ml-[57px] h-[15px] w-[15px] rounded-[1px] border border-[#909090] bg-gradient-to-b from-[#f5f5f5] to-[#cdcdcd]" />
                <div className="grow" />
                <svg width="4" height="6" viewBox="0 0 4 6" className="mr-[23px]"><path d="M4 3l-4-3v6z" fill="#222" /></svg>
              </div>
            </div>
            <div className="flex flex-col gap-[2px] pl-[3px] pt-[1px]">
              {SIDE.map(([t, h]) => (
                <div key={t} className={`${h} ${SANS} w-[20px] whitespace-nowrap border border-[#dcdcdc] bg-[#fafafa] pt-[2px] text-[11.5px] leading-[18px] tracking-[-0.4px] text-[#5a5f74] [writing-mode:vertical-rl]`}>{t}</div>
              ))}
            </div>
          </div>
          <LayerTabs />
          <StatusBar />
        </div>
      </div>
    </div>
  );
}
